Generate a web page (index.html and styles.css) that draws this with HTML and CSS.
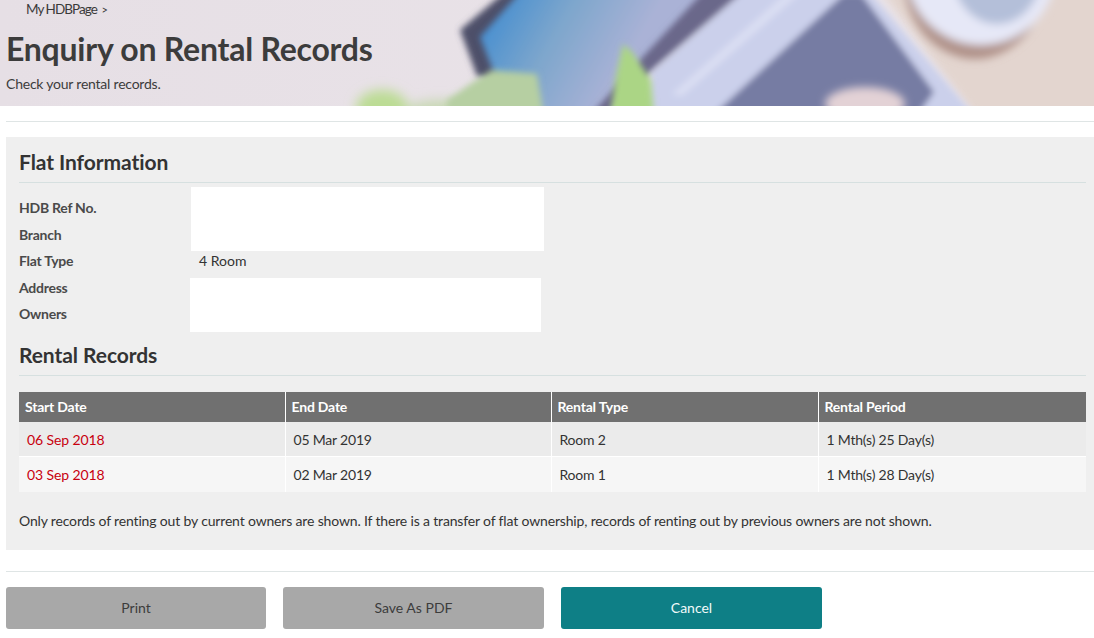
FILE: index.html
```html
<!DOCTYPE html>
<html lang="en">
<head>
<meta charset="utf-8">
<title>Enquiry on Rental Records</title>
<link rel="stylesheet" href="styles.css">
</head>
<body>
<header class="banner">
  <svg class="banner-art" viewBox="0 0 1094 106" preserveAspectRatio="none" aria-hidden="true">
    <defs>
      <filter id="b6" x="-30%" y="-60%" width="160%" height="220%"><feGaussianBlur stdDeviation="6"/></filter>
      <filter id="b4" x="-30%" y="-60%" width="160%" height="220%"><feGaussianBlur stdDeviation="4"/></filter>
      <filter id="b3" x="-30%" y="-60%" width="160%" height="220%"><feGaussianBlur stdDeviation="3"/></filter>
      <linearGradient id="screen" gradientUnits="userSpaceOnUse" x1="490" y1="20" x2="610" y2="90">
        <stop offset="0" stop-color="#4a90d0"/>
        <stop offset="0.45" stop-color="#7da6cc"/>
        <stop offset="1" stop-color="#aab2d6"/>
      </linearGradient>
      <linearGradient id="paper" x1="0" y1="0" x2="1" y2="0">
        <stop offset="0" stop-color="#e6dfe5"/>
        <stop offset="1" stop-color="#ebe5ea"/>
      </linearGradient>
    </defs>
    <rect width="1094" height="106" fill="url(#paper)"/>
    <polygon points="880,-10 1104,-10 1104,116 975,116" fill="#e3d5cf" filter="url(#b4)"/>
    <polygon points="507,-10 460,30 477,76 597,116 725,-10" fill="#4d5069" filter="url(#b3)"/>
    <polygon points="522,-10 480,37 495,76 540,116 597,116 722,-10" fill="url(#screen)" filter="url(#b3)"/>
    <g filter="url(#b3)">
      <polygon points="705,-10 745,-10 652,70 607,116 590,116 640,60" fill="#6a678a"/>
      <polygon points="745,-10 868,-10 975,116 640,116 652,72" fill="#cbd0eb"/>
      <polygon points="790,-10 804,-10 682,96 672,94" fill="#dadef3"/>
      <polygon points="844,-6 861,-6 934,92 917,116 712,116" fill="#767ba3"/>
    </g>
    <g filter="url(#b4)">
      <ellipse cx="865" cy="104" rx="40" ry="17" fill="#e3d2d6"/>
      <ellipse cx="975" cy="-25" rx="72" ry="84" fill="#b09289"/>
      <ellipse cx="981" cy="-30" rx="75" ry="75" fill="#e6e8f7"/>
      <ellipse cx="997" cy="-30" rx="45" ry="54" fill="#b4bfd9"/>
    </g>
    <g filter="url(#b6)">
      <ellipse cx="382" cy="108" rx="26" ry="18" fill="#bcdc94"/>
      <ellipse cx="440" cy="112" rx="35" ry="12" fill="#c8d8b4"/>
    </g>
    <g filter="url(#b3)">
      <polygon points="447,116 447,100 473,82 492,70 537,74 544,116" fill="#b6cfa2"/>
      <polygon points="623,44 632,52 651,80 654,116 610,116 616,76" fill="#abd585"/>
    </g>
  </svg>
  <p class="crumb">My HDBPage <span class="crumb-sep">&gt;</span></p>
  <h1 class="title">Enquiry on Rental Records</h1>
  <p class="subtitle">Check your rental records.</p>
</header>

<main class="page">
  <hr class="rule rule-top">
  <section class="panel">
    <h2 class="section-title">Flat Information</h2>
    <div class="info">
      <div class="info-row"><span class="info-label">HDB Ref No.</span></div>
      <div class="info-row"><span class="info-label">Branch</span></div>
      <div class="info-row"><span class="info-label">Flat Type</span><span class="info-value">4 Room</span></div>
      <div class="info-row"><span class="info-label">Address</span></div>
      <div class="info-row"><span class="info-label">Owners</span></div>
      <div class="redact redact-one"></div>
      <div class="redact redact-two"></div>
    </div>
    <h2 class="section-title section-title-second">Rental Records</h2>
    <table class="records">
      <colgroup><col class="col-a"><col class="col-a"><col class="col-b"><col class="col-c"></colgroup>
      <thead>
        <tr><th>Start Date</th><th>End Date</th><th>Rental Type</th><th>Rental Period</th></tr>
      </thead>
      <tbody>
        <tr class="row-dark"><td class="date-start">06 Sep 2018</td><td>05 Mar 2019</td><td>Room 2</td><td>1 Mth(s) 25 Day(s)</td></tr>
        <tr class="row-light"><td class="date-start">03 Sep 2018</td><td>02 Mar 2019</td><td>Room 1</td><td>1 Mth(s) 28 Day(s)</td></tr>
      </tbody>
    </table>
    <p class="note">Only records of renting out by current owners are shown. If there is a transfer of flat ownership, records of renting out by previous owners are not shown.</p>
  </section>
  <hr class="rule rule-bottom">
  <div class="actions">
    <button class="btn btn-grey btn-first" type="button">Print</button>
    <button class="btn btn-grey" type="button">Save As PDF</button>
    <button class="btn btn-teal" type="button">Cancel</button>
  </div>
</main>
</body>
</html>
```
FILE: styles.css
```css
* { box-sizing: border-box; }
html, body { margin: 0; padding: 0; }
body {
  background: #fff;
  color: #333;
  font-family: "Lato", "Open Sans", sans-serif;
  font-size: 14px;
  overflow: hidden;
}
.banner {
  position: relative;
  height: 106px;
  padding: 0 6px;
  overflow: hidden;
}
.banner-art {
  position: absolute;
  inset: 0;
  width: 100%;
  height: 100%;
}
.crumb, .title, .subtitle { position: relative; margin: 0; }
.crumb {
  padding: 1px 0 0 20px;
  height: 24px;
  font-size: 13.5px;
  line-height: 16px;
  letter-spacing: -0.95px;
  color: #3a3a3a;
}
.crumb-sep { margin-left: 2px; font-size: 11px; }
.title {
  margin-top: 5px;
  font-size: 32px;
  line-height: 40px;
  font-weight: 700;
  letter-spacing: -0.24px;
  color: #3c3c3c;
}
.subtitle {
  margin-top: 6px;
  font-size: 14px;
  line-height: 18px;
  letter-spacing: -0.22px;
  color: #3c3c3c;
}
.page { padding: 0 0 0 6px; }
.rule {
  border: 0;
  border-top: 1px solid #dfe5e5;
  margin: 0;
}
.rule-top { margin-top: 15px; }
.rule-bottom { margin-top: 21px; }
.panel {
  margin-top: 15px;
  height: 413px;
  padding: 10px 8px 0 13px;
  background: #efefef;
}
.section-title {
  margin: 0;
  height: 36px;
  padding-top: 1px;
  border-bottom: 1px solid #d6e0e0;
  font-size: 21px;
  line-height: 27px;
  font-weight: 700;
  letter-spacing: -0.07px;
  color: #333;
}
.section-title-second { margin-top: 9px; height: 35px; padding-top: 0; }
.info { position: relative; padding-top: 11.5px; height: 149px; }
.info-row {
  display: flex;
  height: 26.5px;
  align-items: center;
}
.info-label {
  width: 180px;
  font-weight: 700;
  font-size: 14px;
  letter-spacing: -0.25px;
  color: #4a4a4a;
}
.info-value { font-size: 14px; color: #333; }
.redact { position: absolute; background: #fff; }
.redact-one { left: 172px; top: 4px; width: 353px; height: 64px; }
.redact-two { left: 171px; top: 95px; width: 351px; height: 54px; }
.records {
  width: 100%;
  margin-top: 16px;
  border-collapse: collapse;
  table-layout: fixed;
  font-size: 14px;
}
.col-a { width: 266px; }
.col-b { width: 267px; }
.col-c { width: 268px; }
.records th, .records td {
  text-align: left;
  border-left: 1px solid #fff;
}
.records th:first-child, .records td:first-child { border-left: 0; }
.records th {
  height: 30px;
  padding: 0 6px 2px;
  background: #707070;
  color: #fff;
  font-weight: 700;
  letter-spacing: -0.2px;
}
.records td {
  height: 36px;
  padding: 0 8px;
  color: #333;
  letter-spacing: -0.2px;
}
.row-dark td { height: 34px; padding-top: 1px; background: #ebebeb; border-bottom: 1px solid #fff; }
.row-light td { background: #f6f6f6; }
.records .date-start { color: #c8000f; letter-spacing: -0.1px; }
.note {
  margin: 20px 0 0;
  font-size: 14px;
  line-height: 18px;
  letter-spacing: -0.16px;
  color: #333;
}
.actions {
  display: flex;
  gap: 17px;
  margin-top: 15px;
}
.btn {
  width: 261px;
  height: 42px;
  padding: 0 0 2px;
  border: 0;
  border-radius: 3px;
  font-family: inherit;
  font-size: 14px;
}
.btn-first { width: 260px; }
.btn-grey { background: #a8a8a8; color: #3c3c3c; }
.btn-teal { background: #0e7f86; color: #f2fafa; }
```
